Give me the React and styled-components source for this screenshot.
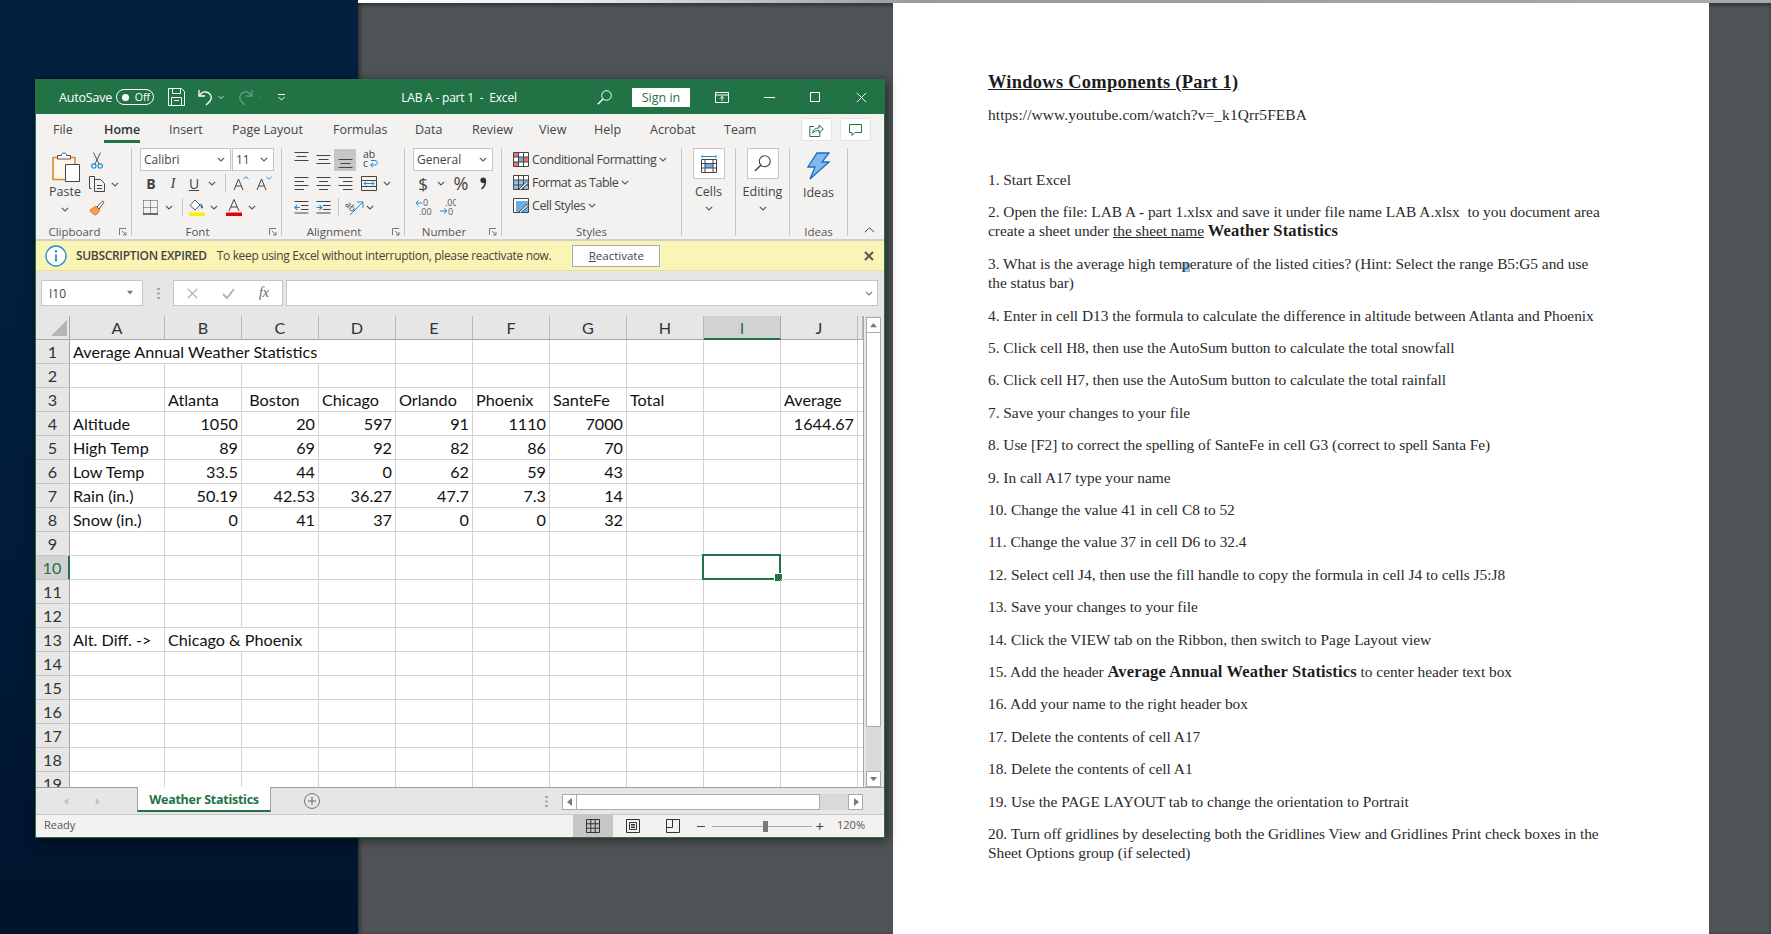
import React from "react";
import styled, { createGlobalStyle } from "styled-components";

const UI_FONT = `"Open Sans", "Noto Sans", sans-serif`;
const CELL_FONT = `Lato, "Open Sans", sans-serif`;
const GREEN = "#217346";

const GlobalStyle = createGlobalStyle`
  html, body { margin: 0; padding: 0; height: 100%; overflow: hidden; }
  #root { height: 100%; }
  * { box-sizing: border-box; }
`;

// page background: desktop on the left, pdf viewer on the right
const Screen = styled.div`
  position: relative;
  display: grid;
  grid-template-columns: 358px 1fr;
  height: 934px;
  width: 1771px;
  overflow: hidden;
`;

const Desktop = styled.div`
  background: linear-gradient(180deg, #03213f 0%, #011d3e 45%, #00142c 100%);
`;

const Viewer = styled.div`
  display: flex;
  flex-direction: column;
  background: #4f5356;
  box-shadow: inset 3px 0 3px rgba(0, 0, 0, 0.25);
`;

const ViewerEdge = styled.div`
  height: 3px;
  flex: none;
  background: linear-gradient(90deg, #fff 0%, #eee 15%, #999 40%, #aaa 100%);
`;

const ViewerBody = styled.div`
  flex: 1;
  padding-left: 535px;
  box-shadow: inset 0 3px 3px rgba(0, 0, 0, 0.3);
`;

const Page = styled.div`
  width: 816px;
  height: 100%;
  background: #fff;
  padding: 68px 0 0 95px;
  font-family: "Liberation Serif", serif;
  font-size: 15.4px;
  line-height: 19.5px;
  letter-spacing: -0.03px;
  color: #2a2a2a;
`;

const DocTitle = styled.div`
  font-size: 18.4px;
  font-weight: bold;
  text-decoration: underline;
  color: #1c1c1c;
  letter-spacing: 0.3px;
  line-height: 22px;
  margin-bottom: 12px;
`;

const DocLink = styled.div`
  letter-spacing: 0.1px;
  margin-bottom: 45px;
`;

const Step = styled.p`
  margin: 0 0 12.9px;
  width: 618px;
  strong {
    font-size: 16.5px;
    letter-spacing: 0.15px;
    color: #1c1c1c;
  }
`;

const Caret = styled.span`
  background: linear-gradient(180deg, transparent 48%, #9cc3e0 48%);
`;

// Excel window
const ExcelWindow = styled.div`
  position: absolute;
  left: 35px;
  top: 79px;
  width: 850px;
  height: 759px;
  display: flex;
  flex-direction: column;
  border: 1px solid ${GREEN};
  background: #e6e6e6;
  box-shadow: 2px 2px 10px rgba(0, 0, 0, 0.55);
  font-family: ${UI_FONT};
  color: #444;
`;

const TitleBar = styled.div`
  height: 34px;
  flex: none;
  display: flex;
  align-items: center;
  background: ${GREEN};
  color: #fff;
  font-size: 12.5px;
  padding-left: 23px;
`;

const TitleSlot = styled.div`
  flex: none;
  width: ${(p) => p.$w}px;
  margin-left: ${(p) => p.$ml || 0}px;
  display: flex;
  align-items: center;
  justify-content: center;
`;

const AutoSaveLabel = styled.span`
  width: 57px;
  letter-spacing: -0.2px;
`;

const Toggle = styled.div`
  width: 38px;
  height: 16px;
  border: 1px solid #fff;
  border-radius: 8px;
  display: flex;
  align-items: center;
  padding: 0 3px 0 5px;
  justify-content: space-between;
  font-size: 10.5px;
  margin-right: 12px;
  &::before {
    content: "";
    width: 7px;
    height: 7px;
    border-radius: 50%;
    background: #fff;
  }
`;

const WindowName = styled.div`
  width: 120px;
  margin-left: 98px;
  margin-right: 77px;
  text-align: center;
  white-space: pre;
  font-size: 12px;
  letter-spacing: -0.2px;
`;

const SignIn = styled.div`
  width: 58px;
  height: 19px;
  background: #fff;
  color: ${GREEN};
  font-size: 12.5px;
  line-height: 19px;
  text-align: center;
  margin: 0 12px 0 20px;
`;

const TabRow = styled.div`
  height: 29px;
  flex: none;
  display: flex;
  align-items: flex-start;
  padding: 6px 13px 0 17px;
  background: #f3f2f1;
`;

const Tab = styled.div`
  width: ${(p) => p.$w}px;
  flex: none;
  display: flex;
`;

const TabLabel = styled.div`
  height: 23px;
  font-size: 12.5px;
  line-height: 20px;
  color: ${(p) => (p.$on ? "#333" : "#444")};
  font-weight: ${(p) => (p.$on ? 600 : 400)};
  border-bottom: ${(p) => (p.$on ? `3px solid ${GREEN}` : "3px solid transparent")};
`;

const TabActions = styled.div`
  margin-left: auto;
  display: flex;
  gap: 8px;
  margin-top: -2px;
`;

const TabAction = styled.div`
  width: 31px;
  height: 23px;
  background: #fff;
  border: 1px solid #e4e3e2;
  border-radius: 2px;
  display: flex;
  align-items: center;
  justify-content: center;
`;

const Ribbon = styled.div`
  height: 98px;
  flex: none;
  display: flex;
  padding-top: 5px;
  background: #f3f2f1;
  border-bottom: 2px solid #d2d0ce;
  position: relative;
`;

const Group = styled.div`
  width: ${(p) => p.$w}px;
  height: 88px;
  flex: none;
  display: flex;
  flex-direction: column;
  border-right: 1px solid #c6c5c4;
  position: relative;
`;

const GroupBody = styled.div`
  flex: 1;
  display: flex;
  padding-left: ${(p) => p.$pad || 0}px;
`;

const GroupStack = styled(GroupBody)`
  flex-direction: column;
`;

const GroupLabel = styled.div`
  height: 16px;
  flex: none;
  font-size: 11.5px;
  line-height: 24px;
  text-align: center;
  padding-right: ${(p) => (p.$launcher ? 18 : 0)}px;
  color: #555;
`;

const Launcher = styled.svg`
  position: absolute;
  right: 4px;
  bottom: 0;
`;

const PasteColumn = styled.div`
  width: 52px;
  display: flex;
  flex-direction: column;
  align-items: center;
  font-size: 12.5px;
  padding-top: 3px;
  margin-left: 3px;
  svg:first-child {
    margin-left: 2px;
  }
`;

const PasteText = styled.div`
  line-height: 16px;
  margin: 2px 0 7px;
`;

const ToolColumn = styled.div`
  display: flex;
  flex-direction: column;
  margin-left: -3px;
`;

const ToolRow = styled.div`
  height: ${(p) => p.$h || 24}px;
  display: flex;
  align-items: center;
`;

const Slot = styled.div`
  width: ${(p) => p.$w}px;
  height: 22px;
  flex: none;
  display: flex;
  align-items: center;
  justify-content: center;
  font-family: ${(p) => (p.$serif ? `"Liberation Serif", serif` : "inherit")};
  font-size: ${(p) => p.$size || 14}px;
  font-weight: ${(p) => (p.$bold ? 700 : 400)};
  font-style: ${(p) => (p.$italic ? "italic" : "normal")};
  text-decoration: ${(p) => (p.$under ? "underline" : "none")};
  background: ${(p) => (p.$on ? "#c6c6c6" : "transparent")};
  color: #444;
`;

const RowRule = styled.div`
  width: ${(p) => p.$w}px;
  flex: none;
  height: 18px;
  display: flex;
  justify-content: center;
  &::before {
    content: "";
    width: 1px;
    background: #c6c5c4;
  }
`;

const Combo = styled.div`
  width: ${(p) => p.$w}px;
  height: 23px;
  background: #fff;
  border: 1px solid #c6c6c6;
  display: flex;
  align-items: center;
  justify-content: space-between;
  padding: 0 5px 0 3px;
  font-size: 12px;
  margin-right: ${(p) => p.$mr || 0}px;
  color: #444;
`;

const StyleRow = styled.div`
  height: 23px;
  display: flex;
  align-items: center;
  gap: 3px;
  font-size: 12.5px;
  letter-spacing: -0.45px;
  color: #444;
`;

const BigColumn = styled.div`
  flex: 1;
  display: flex;
  flex-direction: column;
  align-items: center;
  font-size: 12.5px;
`;

const BigButton = styled.div`
  width: 32px;
  height: 31px;
  background: #fff;
  border: 1px solid #c6c6c6;
  display: flex;
  align-items: center;
  justify-content: center;
`;

const BigText = styled.div`
  line-height: 16px;
  margin: 5px 0 6px;
`;

const IdeasText = styled.div`
  line-height: 16px;
  margin-top: 5px;
`;

const IdeaMark = styled.div`
  display: flex;
  margin-top: 4px;
`;

const Collapse = styled.svg`
  position: absolute;
  right: 9px;
  bottom: 6px;
`;

// subscription notice
const Notice = styled.div`
  height: 30px;
  flex: none;
  display: flex;
  align-items: center;
  background: #fbf5b5;
  border-bottom: 1px solid #e6e29f;
  padding: 0 10px 0 9px;
  font-size: 12px;
  color: #444;
`;

const NoticeHead = styled.span`
  margin: 0 10px 0 9px;
  font-weight: 600;
  letter-spacing: -0.32px;
`;

const NoticeText = styled.span`
  letter-spacing: -0.34px;
`;

const NoticeButton = styled.div`
  width: 88px;
  height: 22px;
  margin-left: 21px;
  background: #fff;
  border: 1px solid #a8a8a8;
  text-align: center;
  line-height: 19px;
  font-size: 11.5px;
  u {
    text-decoration: underline;
  }
`;

const NoticeClose = styled.svg`
  margin-left: auto;
`;

// formula bar
const FormulaBar = styled.div`
  height: 45px;
  flex: none;
  display: flex;
  align-items: flex-start;
  padding: 9px 6px 0 5px;
  background: #e6e6e6;
`;

const NameBox = styled.div`
  width: 102px;
  height: 26px;
  background: #fff;
  border: 1px solid #c6c6c6;
  display: flex;
  align-items: center;
  justify-content: space-between;
  padding: 0 9px 0 7px;
  font-size: 12px;
`;

const Grip = styled.div`
  width: 30px;
  height: 26px;
  display: flex;
  align-items: center;
  justify-content: center;
`;

const FxBox = styled.div`
  width: 110px;
  height: 26px;
  background: #fff;
  border: 1px solid #c6c6c6;
  display: grid;
  grid-template-columns: repeat(3, 36px);
  align-items: center;
  justify-items: center;
  margin-right: 3px;
`;

const FxMark = styled.span`
  font-family: "Liberation Serif", serif;
  font-style: italic;
  font-size: 14px;
  color: #666;
`;

const FormulaInput = styled.div`
  flex: 1;
  height: 26px;
  background: #fff;
  border: 1px solid #c6c6c6;
  display: flex;
  align-items: center;
  justify-content: flex-end;
  padding-right: 4px;
`;

// worksheet
const SheetArea = styled.div`
  height: 471px;
  flex: none;
  display: flex;
  align-items: stretch;
`;

const GridClip = styled.div`
  width: 828px;
  flex: none;
  overflow: hidden;
  border-right: 1px solid #a8a8a8;
  margin-right: 2px;
  background: #fff;
`;

const SheetGrid = styled.div`
  display: grid;
  grid-template-columns: 34px 95px repeat(9, 77px) 5px;
  grid-auto-rows: 24px;
  font-family: ${CELL_FONT};
  font-size: 16.2px;
  color: #111;
`;

const Corner = styled.div`
  background: #e6e6e6;
  border-right: 1px solid #a8a8a8;
  border-bottom: 1px solid #a8a8a8;
  &::after {
    content: "";
    display: block;
    width: 16px;
    height: 16px;
    margin: 4px 0 0 15px;
    background: #b5b5b5;
    clip-path: polygon(100% 0, 100% 100%, 0 100%);
  }
`;

const ColHead = styled.div`
  background: ${(p) => (p.$on ? "#d2d2d2" : "#e6e6e6")};
  border-right: 1px solid ${(p) => (p.$on ? "#a8a8a8" : "#b8b8b8")};
  border-bottom: ${(p) => (p.$on ? `2px solid ${GREEN}` : "1px solid #a8a8a8")};
  color: ${(p) => (p.$on ? GREEN : "#333")};
  text-align: center;
  line-height: 23px;
`;

const RowHead = styled.div`
  background: ${(p) => (p.$on ? "#d2d2d2" : "#e6e6e6")};
  border-right: ${(p) => (p.$on ? `2px solid ${GREEN}` : "1px solid #a8a8a8")};
  border-bottom: 1px solid #c4c4c4;
  color: ${(p) => (p.$on ? GREEN : "#333")};
  text-align: center;
  line-height: 23px;
`;

const Cell = styled.div`
  position: relative;
  border-bottom: 1px solid #d4d4d4;
  border-right: ${(p) => (p.$spill ? "none" : "1px solid #d4d4d4")};
  padding: 0 3px;
  line-height: 24px;
  white-space: nowrap;
  text-align: ${(p) => (p.$num ? "right" : "left")};
`;

const Selection = styled.div`
  position: absolute;
  top: -2px;
  left: -2px;
  right: -1px;
  bottom: -1px;
  border: 2px solid ${GREEN};
  &::after {
    content: "";
    position: absolute;
    right: -4px;
    bottom: -4px;
    width: 7px;
    height: 7px;
    background: ${GREEN};
    border: 1px solid #fff;
  }
`;

const VScroll = styled.div`
  width: 15px;
  flex: none;
  display: flex;
  flex-direction: column;
  padding-top: 1px;
  background: #d9d9d9;
`;

const ScrollButton = styled.div`
  width: 15px;
  height: 16px;
  flex: none;
  background: #fff;
  border: 1px solid #ababab;
  display: flex;
  align-items: center;
  justify-content: center;
`;

const VThumb = styled.div`
  height: 394px;
  flex: none;
  background: #fff;
  border: 1px solid #ababab;
  border-top: 0;
  margin-bottom: auto;
`;

// tabs + status bar
const SheetBar = styled.div`
  height: 28px;
  flex: none;
  display: flex;
  align-items: flex-start;
  background: #e6e6e6;
  border-top: 1px solid #a0a0a0;
  border-bottom: 1px solid #c8c8c8;
`;

const SheetArrows = styled.div`
  width: 101px;
  height: 26px;
  flex: none;
  display: flex;
  gap: 24px;
  align-items: center;
  padding-left: 27px;
`;

const SheetTab = styled.div`
  width: 134px;
  height: 25px;
  margin-top: -1px;
  flex: none;
  background: #fff;
  border-left: 1px solid #a0a0a0;
  border-right: 1px solid #a0a0a0;
  border-bottom: 2px solid ${GREEN};
  color: ${GREEN};
  font-weight: 700;
  font-size: 12.5px;
  letter-spacing: -0.25px;
  text-align: center;
  line-height: 26px;
`;

const AddSheet = styled.div`
  width: 16px;
  height: 16px;
  margin: 5px 0 0 33px;
  flex: none;
  border: 1px solid #777;
  border-radius: 50%;
  display: flex;
  align-items: center;
  justify-content: center;
`;

const BarGrip = styled.div`
  width: 12px;
  margin-left: 220px;
  height: 26px;
  flex: none;
  display: flex;
  align-items: center;
  justify-content: center;
`;

const HScroll = styled.div`
  width: 301px;
  height: 16px;
  margin: 6px 0 0 10px;
  flex: none;
  display: flex;
  background: #d9d9d9;
`;

const HThumb = styled.div`
  width: 243px;
  flex: none;
  background: #fff;
  border: 1px solid #ababab;
  border-left: 0;
  margin-right: auto;
`;

const StatusBar = styled.div`
  height: 22px;
  flex: none;
  display: flex;
  align-items: center;
  padding: 0 19px 0 8px;
  background: #f3f2f1;
  font-size: 11px;
  color: #555;
`;

const StatusText = styled.span`
  margin-bottom: 3px;
`;

const ViewButton = styled.div`
  width: 40px;
  height: 22px;
  flex: none;
  display: flex;
  align-items: center;
  justify-content: center;
  background: ${(p) => (p.$on ? "#c6c6c6" : "transparent")};
  margin-left: ${(p) => (p.$on ? "auto" : "0")};
`;

const ZoomMinus = styled.span`
  width: 8px;
  height: 1px;
  margin: 0 7px 0 4px;
  background: #444;
`;

const ZoomTrack = styled.div`
  width: 100px;
  height: 1px;
  background: #a8a8a8;
  position: relative;
  &::after {
    content: "";
    position: absolute;
    left: 51px;
    top: -5px;
    width: 5px;
    height: 11px;
    background: #777;
  }
`;

const ZoomPlus = styled.span`
  margin: 0 13px 0 3px;
  font-size: 15px;
  line-height: 1;
  color: #444;
`;

// ---- icons ----
const Chevron = ({ color = "#555" }) => (
  <svg width="8" height="5" viewBox="0 0 8 5">
    <path d="M.8.8 4 4 7.2.8" fill="none" stroke={color} strokeWidth="1.1" />
  </svg>
);

const Tri = ({ dir = "down", color = "#777", size = 6 }) => {
  const shapes = { down: "0,1 8,1 4,6", up: "0,6 8,6 4,1", left: "6,0 6,8 1,4", right: "2,0 2,8 7,4" };
  return (
    <svg width={size} height={size} viewBox="0 0 8 8">
      <polygon points={shapes[dir]} fill={color} />
    </svg>
  );
};

const Bars = ({ rows, h = 18, color = "#444" }) => (
  <svg width="15" height={h} viewBox={`0 0 15 ${h}`}>
    {rows.map(([a, b, y], i) => (
      <path key={i} d={`M${a} ${y}H${b}`} stroke={color} />
    ))}
  </svg>
);

const VALIGN_TOP = [[.5, 14.5, 1.5], [2.5, 12.5, 5.5], [.5, 14.5, 9.5]];
const VALIGN_MID = [[.5, 14.5, 4.5], [2.5, 12.5, 8.5], [.5, 14.5, 12.5]];
const VALIGN_BOT = [[.5, 14.5, 8.5], [2.5, 12.5, 12.5], [.5, 14.5, 16.5]];
const ALIGN_LEFT = [[.5, 14.5, 3.5], [.5, 10, 7.5], [.5, 14.5, 11.5], [.5, 10, 15.5]];
const ALIGN_MID = [[.5, 14.5, 3.5], [3, 12, 7.5], [.5, 14.5, 11.5], [3, 12, 15.5]];
const ALIGN_RIGHT = [[.5, 14.5, 3.5], [5, 14.5, 7.5], [.5, 14.5, 11.5], [5, 14.5, 15.5]];

const Indent = ({ flip }) => (
  <svg width="15" height="14" viewBox="0 0 15 14">
    <path d="M.5 1.5h14M7 5.5h7.5M7 9.5h7.5M.5 13h14" stroke="#444" />
    <path d={flip ? "M.5 7.5h5M3.5 5.2l2.3 2.3-2.3 2.3" : "M6 7.5H1M3.2 5.2.9 7.5l2.3 2.3"} fill="none" stroke="#1f8dd6" strokeWidth="1.2" />
  </svg>
);

const SaveIcon = () => (
  <svg width="17" height="18" viewBox="0 0 17 18" fill="none" stroke="#fff">
    <path d="M.5.5h13l3 3v14H.5z" />
    <path d="M4.5.5v5h8v-5M3.5 17.5v-8h10v8M6 12.5h5" />
  </svg>
);

const UndoIcon = ({ color = "#fff", flip }) => (
  <svg width="16" height="17" viewBox="0 0 16 17" fill="none" stroke={color} strokeWidth="1.3" style={flip ? { transform: "scaleX(-1)" } : undefined}>
    <path d="M1 1v6h6" />
    <path d="M1 7c2-3 4-4.500 7-4 4 .6 6 4 5 7-.5 1.800-2.500 4-5 6" />
  </svg>
);

const CustomizeIcon = () => (
  <svg width="9" height="7" viewBox="0 0 9 7">
    <path d="M1 .5h7M1.500 3 4.500 6l3-3" fill="none" stroke="#fff" />
  </svg>
);

const SearchIcon = ({ color = "#fff", size = 15 }) => (
  <svg width={size} height={size} viewBox="0 0 15 15" fill="none" stroke={color}>
    <circle cx="9.5" cy="5.5" r="4.8" />
    <path d="M6 9 .8 14.200" strokeWidth="1.3" />
  </svg>
);

const DisplayIcon = () => (
  <svg width="14" height="11" viewBox="0 0 14 11" fill="none" stroke="#fff">
    <path d="M.5.5h13v10H.5zM.5 3h13" />
    <path d="M7 9V4.500M5 6.500l2-2 2 2" />
  </svg>
);

const ShareIcon = () => (
  <svg width="15" height="14" viewBox="0 0 15 14" fill="none" stroke={GREEN}>
    <path d="M5 3.500H.8v10h10V9" />
    <path d="M3.500 10c.5-3.500 3-5 6.500-5V2l4.300 4-4.300 4V7.500c-2.500 0-4.500.5-6.500 2.500z" />
  </svg>
);

const CommentIcon = () => (
  <svg width="13" height="12" viewBox="0 0 13 12" fill="none" stroke={GREEN}>
    <path d="M.5.5h12v8H6l-3 3v-3H.5z" />
  </svg>
);

const PasteIcon = () => (
  <svg width="30" height="31" viewBox="0 0 30 31">
    <path d="M2 6.5h22v22H2z" fill="#fff8ef" stroke="#e5852b" strokeWidth="1.6" />
    <path d="M6.500 8V4.500h4c0-3.500 5-3.500 5 0h4V8z" fill="#fff" stroke="#555" />
    <path d="M14.500 13.500h14v17h-14z" fill="#fff" stroke="#444" />
  </svg>
);

const CutIcon = () => (
  <svg width="12" height="17" viewBox="0 0 12 17" fill="none">
    <path d="M2.500 .5 8 12M9.500.5 4 12" stroke="#555" />
    <circle cx="2.8" cy="14" r="2.2" stroke="#1f8dd6" strokeWidth="1.2" />
    <circle cx="9.2" cy="14" r="2.2" stroke="#1f8dd6" strokeWidth="1.2" />
  </svg>
);

const CopyIcon = () => (
  <svg width="17" height="16" viewBox="0 0 17 16" fill="none" stroke="#444">
    <path d="M5.500 3.500V.5H.5v12h2" />
    <path d="M5.500 3.500h6l4 4v8h-10z" />
    <path d="M8 9.500h5M8 12.500h5" />
  </svg>
);

const PainterIcon = () => (
  <svg width="16" height="16" viewBox="0 0 16 16">
    <path d="M1 10 7 6l4 4-4 5C5 15 2 13 1 10z" fill="#f3a14b" stroke="#e0752a" />
    <path d="M8 7l5-5.500c1-1 2.500.5 1.500 1.500L10 9z" fill="#fff" stroke="#555" />
  </svg>
);

const BorderIcon = () => (
  <svg width="15" height="15" viewBox="0 0 15 15" fill="none" stroke="#444">
    <path d="M.5.5h14M.5 7.500h14M7.500.5v13M.5.5v13M14.500.5v13" strokeDasharray="1 1" />
    <path d="M0 14h15" strokeWidth="1.3" stroke="#222" />
  </svg>
);

const FillIcon = () => (
  <svg width="16" height="17" viewBox="0 0 16 17">
    <path d="M6 1 1 6.500 6 11l5-5z" fill="#fff" stroke="#555" />
    <path d="M11 4.500c2 1 3 2.500 3 4a1 1 0 0 1-2 0z" fill="#1b6ec2" />
    <path d="M0 13.500h16V17H0z" fill="#ffee00" />
  </svg>
);

const FontColorIcon = () => (
  <svg width="16" height="17" viewBox="0 0 16 17">
    <path d="M3 12 8 .5 13 12M5 8h6" fill="none" stroke="#444" />
    <path d="M0 13.500h16V17H0z" fill="#e60000" />
  </svg>
);

const Caretted = ({ up }) => (
  <svg width="16" height="15" viewBox="0 0 16 15" fill="none">
    <path d="M1 14 5.500 3 10 14M2.800 10h5.500" stroke="#444" />
    <path d={up ? "M10.500 3 13 .8 15.500 3" : "M10.500 1 13 3.200 15.500 1"} stroke="#1f8dd6" />
  </svg>
);

const WrapIcon = () => (
  <svg width="17" height="19" viewBox="0 0 17 19" fill="none">
    <text x="1" y="8" fontSize="10.5" fontFamily="Open Sans" fill="#444">ab</text>
    <text x="1" y="17" fontSize="10.5" fontFamily="Open Sans" fill="#444">c</text>
    <path d="M9 15h4c3 0 3-4.500 0-4.500H9M11 13 8.500 15l2.500 2.200" stroke="#1f8dd6" />
  </svg>
);

const MergeIcon = () => (
  <svg width="16" height="15" viewBox="0 0 16 15" fill="none">
    <path d="M.5.5h15v14H.5z" stroke="#444" />
    <path d="M.5 4.500h15M.5 10.500h15" stroke="#444" />
    <path d="M3 7.500h10M5 5.500l-2 2 2 2M11 5.500l2 2-2 2" stroke="#1f8dd6" />
  </svg>
);

const OrientIcon = () => (
  <svg width="20" height="17" viewBox="0 0 20 17" fill="none">
    <text x="2" y="9" fontSize="9" fontFamily="Open Sans" fill="#444" transform="rotate(45 5 6)">ab</text>
    <path d="M6 16 18.500 3.500M13 3h6v6" stroke="#1f8dd6" />
  </svg>
);

const DecimalIcon = ({ more }) => (
  <svg width="17" height="19" viewBox="0 0 17 19">
    <text x={more ? 6 : 8} y="8" fontSize="9" fontFamily="Open Sans" fill="#555">{more ? ".00" : "0"}</text>
    <text x={more ? 9 : 4} y="17" fontSize="9" fontFamily="Open Sans" fill="#555">{more ? "0" : ".00"}</text>
    <path d={more ? "M1 13h7M5 10.500 8 13l-3 2.500" : "M7 5H1M3.500 2.500 1 5l2.500 2.500"} fill="none" stroke="#1f8dd6" />
  </svg>
);

const CommaIcon = () => (
  <svg width="7" height="13" viewBox="0 0 7 13">
    <circle cx="3.2" cy="3.2" r="2.8" fill="#333" />
    <path d="M5.500 3.500c0 3.500-1.500 6.500-4 8.500" fill="none" stroke="#333" strokeWidth="1.6" />
  </svg>
);

const CondIcon = () => (
  <svg width="16" height="15" viewBox="0 0 16 15">
    <path d="M.5.5h15v14H.5z" fill="#fff" stroke="#444" />
    <path d="M1 1h5v4H1zM1 10h5v4H1zM10.500 5H15v5h-4.500z" fill="#f07070" />
    <path d="M6 5h4.500v5H6z" fill="#6aaee8" />
    <path d="M5.500.5v14M10.500.5v14M.5 5h15M.5 10h15" stroke="#444" fill="none" />
  </svg>
);

const TableIcon = () => (
  <svg width="16" height="15" viewBox="0 0 16 15">
    <path d="M.5.5h15v14H.5z" fill="#fff" stroke="#444" />
    <path d="M1 5h14v9H1z" fill="#8cc0ee" />
    <path d="M5.500.5v14M10.500.5v14M.5 5h15M.5 10h15" stroke="#444" fill="none" />
    <path d="M6 14 14 6.500l1.500 1.500L7.500 15z" fill="#fff" stroke="#444" />
  </svg>
);

const CellStyleIcon = () => (
  <svg width="16" height="15" viewBox="0 0 16 15">
    <path d="M.5.5h15v14H.5z" fill="#fff" stroke="#444" />
    <path d="M3 3h12v11H3z" fill="#6aaee8" />
    <path d="M6 14 14 6.500l1.500 1.500L7.500 15z" fill="#fff" stroke="#444" />
  </svg>
);

const CellsIcon = () => (
  <svg width="16" height="18" viewBox="0 0 16 18">
    <path d="M1 1.500h14M1 0v3M15 0v3" stroke="#1f8dd6" fill="none" />
    <path d="M.5 4.500h15v13H.5z" fill="#fff" stroke="#444" />
    <path d="M4 8h8v5H4z" fill="#6aaee8" />
    <path d="M4 4.500v13M12 4.500v13M.5 8.500h15M.5 13h15" stroke="#444" fill="none" />
  </svg>
);

const BoltIcon = () => (
  <svg width="23" height="28" viewBox="0 0 23 28">
    <path d="M10 1h12l-7 9h7L3 27l5-12H1z" fill="#83b9ec" stroke="#1a6fc0" strokeWidth="1.3" />
  </svg>
);

const InfoIcon = () => (
  <svg width="22" height="22" viewBox="0 0 22 22">
    <circle cx="11" cy="11" r="10" fill="#fff" stroke="#1f8dd6" strokeWidth="1.3" />
    <path d="M11 9.500v7" stroke="#1f8dd6" strokeWidth="1.8" />
    <circle cx="11" cy="6.3" r="1.2" fill="#1f8dd6" />
  </svg>
);

const CrossIcon = ({ color = "#fff", size = 12, width = 1 }) => (
  <svg width={size} height={size} viewBox="0 0 12 12">
    <path d="M.8.8l10.400 10.400M11.200.8.8 11.200" stroke={color} strokeWidth={width} />
  </svg>
);

const CheckIcon = () => (
  <svg width="13" height="11" viewBox="0 0 13 11">
    <path d="M1 6l4 4 7-9" fill="none" stroke="#b4b4b4" strokeWidth="2" />
  </svg>
);

const GripDots = () => (
  <svg width="3" height="11" viewBox="0 0 3 11" fill="#aaa">
    <path d="M0 0h3v2H0zM0 4.500h3v2H0zM0 9h3v2H0z" />
  </svg>
);

const LauncherIcon = () => (
  <Launcher width="8" height="8" viewBox="0 0 8 8" fill="none" stroke="#777">
    <path d="M.5 7V.5H7M3 3l4 4M7 4v3H4" />
  </Launcher>
);

const GridView = () => (
  <svg width="14" height="14" viewBox="0 0 14 14" fill="none" stroke="#333">
    <path d="M.5.5h13v13H.5zM4.800.5v13M9.200.5v13M.5 4.800h13M.5 9.200h13" />
  </svg>
);

const PageView = () => (
  <svg width="14" height="14" viewBox="0 0 14 14" fill="none" stroke="#333">
    <path d="M.5.5h13v13H.5zM3.500 3.500h7v7h-7zM5 5.500h4M5 7h4M5 8.500h4" />
  </svg>
);

const BreakView = () => (
  <svg width="14" height="14" viewBox="0 0 14 14" fill="none" stroke="#333">
    <path d="M.5.5h13v13H.5zM.5 8.500h6v-8" />
  </svg>
);

// ---- data ----
const COLS = ["A", "B", "C", "D", "E", "F", "G", "H", "I", "J"];

const DATA = {
  1: ["Average Annual Weather Statistics"],
  3: ["", "Atlanta", "\u00a0Boston", "Chicago", "Orlando", "Phoenix", "SanteFe", "Total", "", "Average"],
  4: ["Altitude", 1050, 20, 597, 91, 1110, 7000, "", "", 1644.67],
  5: ["High Temp", 89, 69, 92, 82, 86, 70],
  6: ["Low Temp", 33.5, 44, 0, 62, 59, 43],
  7: ["Rain (in.)", 50.19, 42.53, 36.27, 47.7, 7.3, 14],
  8: ["Snow (in.)", 0, 41, 37, 0, 0, 32],
  13: ["Alt. Diff. ->", "Chicago & Phoenix"],
};

// cells whose text runs over into the next one
const SPILL = ["1-0", "1-1", "1-2", "13-1"];

const ROW_NUMBERS = Array.from({ length: 19 }, (_, i) => i + 1);

// ribbon tab name, and the room it takes up to the next tab
const TABS = [
  ["File", 51],
  ["Home", 65],
  ["Insert", 63],
  ["Page Layout", 101],
  ["Formulas", 82],
  ["Data", 57],
  ["Review", 67],
  ["View", 55],
  ["Help", 56],
  ["Acrobat", 74],
  ["Team", 40],
];

const Worksheet = () => (
  <SheetGrid>
    <Corner />
    {COLS.map((c) => (
      <ColHead key={c} $on={c === "I"}>{c}</ColHead>
    ))}
    <ColHead />
    {ROW_NUMBERS.map((r) => (
      <React.Fragment key={r}>
        <RowHead $on={r === 10}>{r}</RowHead>
        {COLS.map((c, i) => {
          const value = DATA[r]?.[i] ?? "";
          return (
            <Cell key={c} $num={typeof value === "number"} $spill={SPILL.includes(`${r}-${i}`)}>
              {value}
              {r === 10 && c === "I" && <Selection />}
            </Cell>
          );
        })}
        <Cell />
      </React.Fragment>
    ))}
  </SheetGrid>
);

const App = () => (
  <Screen>
    <GlobalStyle />
    <Desktop />
    <Viewer>
      <ViewerEdge />
      <ViewerBody>
        <Page>
          <DocTitle>Windows Components (Part 1)</DocTitle>
          <DocLink>https://www.youtube.com/watch?v=_k1Qrr5FEBA</DocLink>
          <Step>1. Start Excel</Step>
          <Step>
            2. Open the file: LAB A - part 1.xlsx and save it under file name LAB A.xlsx&nbsp; to you document area create a sheet under <u>the sheet name</u> <strong>Weather Statistics</strong>
          </Step>
          <Step>
            3. What is the average high tem<Caret>p</Caret>erature of the listed cities? (Hint: Select the range B5:G5 and use the status bar)
          </Step>
          <Step>4. Enter in cell D13 the formula to calculate the difference in altitude between Atlanta and Phoenix</Step>
          <Step>5. Click cell H8, then use the AutoSum button to calculate the total snowfall</Step>
          <Step>6. Click cell H7, then use the AutoSum button to calculate the total rainfall</Step>
          <Step>7. Save your changes to your file</Step>
          <Step>8. Use [F2] to correct the spelling of SanteFe in cell G3 (correct to spell Santa Fe)</Step>
          <Step>9. In call A17 type your name</Step>
          <Step>10. Change the value 41 in cell C8 to 52</Step>
          <Step>11. Change the value 37 in cell D6 to 32.4</Step>
          <Step>12. Select cell J4, then use the fill handle to copy the formula in cell J4 to cells J5:J8</Step>
          <Step>13. Save your changes to your file</Step>
          <Step>14. Click the VIEW tab on the Ribbon, then switch to Page Layout view</Step>
          <Step>
            15. Add the header <strong>Average Annual Weather Statistics</strong> to center header text box
          </Step>
          <Step>16. Add your name to the right header box</Step>
          <Step>17. Delete the contents of cell A17</Step>
          <Step>18. Delete the contents of cell A1</Step>
          <Step>19. Use the PAGE LAYOUT tab to change the orientation to Portrait</Step>
          <Step>20. Turn off gridlines by deselecting both the Gridlines View and Gridlines Print check boxes in the Sheet Options group (if selected)</Step>
        </Page>
      </ViewerBody>
    </Viewer>

    <ExcelWindow>
      <TitleBar>
        <AutoSaveLabel>AutoSave</AutoSaveLabel>
        <Toggle>Off</Toggle>
        <TitleSlot $w={21}><SaveIcon /></TitleSlot>
        <TitleSlot $w={24} $ml={7}><UndoIcon /></TitleSlot>
        <TitleSlot $w={6}><Chevron color="#fff" /></TitleSlot>
        <TitleSlot $w={24} $ml={9}><UndoIcon color="#5f9f7d" flip /></TitleSlot>
        <TitleSlot $w={4}><Chevron color="#5f9f7d" /></TitleSlot>
        <TitleSlot $w={40}><CustomizeIcon /></TitleSlot>
        <WindowName>{"LAB A - part 1  -  Excel"}</WindowName>
        <TitleSlot $w={16}><SearchIcon /></TitleSlot>
        <SignIn>Sign in</SignIn>
        <TitleSlot $w={40}><DisplayIcon /></TitleSlot>
        <TitleSlot $w={46} $ml={4}><Bars rows={[[2, 13, 5.5]]} h={11} color="#fff" /></TitleSlot>
        <TitleSlot $w={46}>
          <svg width="10" height="10" viewBox="0 0 10 10"><path d="M.5.5h9v9h-9z" fill="none" stroke="#fff" /></svg>
        </TitleSlot>
        <TitleSlot $w={46}><CrossIcon size={11} /></TitleSlot>
      </TitleBar>

      <TabRow>
        {TABS.map(([name, room]) => (
          <Tab key={name} $w={room}>
            <TabLabel $on={name === "Home"}>{name}</TabLabel>
          </Tab>
        ))}
        <TabActions>
          <TabAction><ShareIcon /></TabAction>
          <TabAction><CommentIcon /></TabAction>
        </TabActions>
      </TabRow>

      <Ribbon>
        <Group $w={96}>
          <GroupBody>
            <PasteColumn>
              <PasteIcon />
              <PasteText>Paste</PasteText>
              <Chevron />
            </PasteColumn>
            <ToolColumn>
              <ToolRow><Slot $w={18}><CutIcon /></Slot></ToolRow>
              <ToolRow><Slot $w={18}><CopyIcon /></Slot><Slot $w={18}><Chevron /></Slot></ToolRow>
              <ToolRow><Slot $w={18}><PainterIcon /></Slot></ToolRow>
            </ToolColumn>
          </GroupBody>
          <GroupLabel $launcher>Clipboard</GroupLabel>
          <LauncherIcon />
        </Group>

        <Group $w={150}>
          <GroupStack $pad={8}>
            <ToolRow $h={23}>
              <Combo $w={91} $mr={1}>Calibri<Chevron /></Combo>
              <Combo $w={42}>11<Chevron /></Combo>
            </ToolRow>
            <ToolRow>
              <Slot $w={22} $bold>B</Slot>
              <Slot $w={22} $italic $serif $size={15}>I</Slot>
              <Slot $w={20} $under>U</Slot>
              <Slot $w={16}><Chevron /></Slot>
              <RowRule $w={10} />
              <Slot $w={22}><Caretted up /></Slot>
              <Slot $w={24}><Caretted /></Slot>
            </ToolRow>
            <ToolRow>
              <Slot $w={20}><BorderIcon /></Slot>
              <Slot $w={18}><Chevron /></Slot>
              <RowRule $w={8} />
              <Slot $w={22}><FillIcon /></Slot>
              <Slot $w={12}><Chevron /></Slot>
              <Slot $w={28}><FontColorIcon /></Slot>
              <Slot $w={8}><Chevron /></Slot>
            </ToolRow>
          </GroupStack>
          <GroupLabel $launcher>Font</GroupLabel>
          <LauncherIcon />
        </Group>

        <Group $w={123}>
          <GroupStack $pad={8}>
            <ToolRow $h={23}>
              <Slot $w={22}><Bars rows={VALIGN_TOP} /></Slot>
              <Slot $w={22}><Bars rows={VALIGN_MID} /></Slot>
              <Slot $w={22} $on><Bars rows={VALIGN_BOT} /></Slot>
              <Slot $w={28}><WrapIcon /></Slot>
            </ToolRow>
            <ToolRow>
              <Slot $w={22}><Bars rows={ALIGN_LEFT} /></Slot>
              <Slot $w={22}><Bars rows={ALIGN_MID} /></Slot>
              <Slot $w={22}><Bars rows={ALIGN_RIGHT} /></Slot>
              <Slot $w={26}><MergeIcon /></Slot>
              <Slot $w={10}><Chevron /></Slot>
            </ToolRow>
            <ToolRow>
              <Slot $w={22}><Indent /></Slot>
              <Slot $w={22}><Indent flip /></Slot>
              <RowRule $w={8} />
              <Slot $w={24}><OrientIcon /></Slot>
              <Slot $w={8}><Chevron /></Slot>
            </ToolRow>
          </GroupStack>
          <GroupLabel $launcher>Alignment</GroupLabel>
          <LauncherIcon />
        </Group>

        <Group $w={97}>
          <GroupStack $pad={8}>
            <ToolRow $h={23}>
              <Combo $w={80}>General<Chevron /></Combo>
            </ToolRow>
            <ToolRow>
              <Slot $w={20} $size={17}>$</Slot>
              <Slot $w={16}><Chevron /></Slot>
              <Slot $w={24} $size={18}>%</Slot>
              <Slot $w={20}><CommaIcon /></Slot>
            </ToolRow>
            <ToolRow>
              <Slot $w={20}><DecimalIcon /></Slot>
              <Slot $w={28}><DecimalIcon more /></Slot>
            </ToolRow>
          </GroupStack>
          <GroupLabel $launcher>Number</GroupLabel>
          <LauncherIcon />
        </Group>

        <Group $w={180}>
          <GroupStack $pad={11}>
            <StyleRow><CondIcon /><span>Conditional Formatting</span><Chevron /></StyleRow>
            <StyleRow><TableIcon /><span>Format as Table</span><Chevron /></StyleRow>
            <StyleRow><CellStyleIcon /><span>Cell Styles</span><Chevron /></StyleRow>
          </GroupStack>
          <GroupLabel>Styles</GroupLabel>
        </Group>

        <Group $w={54}>
          <BigColumn>
            <BigButton><CellsIcon /></BigButton>
            <BigText>Cells</BigText>
            <Chevron />
          </BigColumn>
        </Group>

        <Group $w={54}>
          <BigColumn>
            <BigButton><SearchIcon color="#444" size={17} /></BigButton>
            <BigText>Editing</BigText>
            <Chevron />
          </BigColumn>
        </Group>

        <Group $w={58}>
          <BigColumn>
            <IdeaMark><BoltIcon /></IdeaMark>
            <IdeasText>Ideas</IdeasText>
          </BigColumn>
          <GroupLabel>Ideas</GroupLabel>
        </Group>

        <Collapse width="11" height="6" viewBox="0 0 11 6">
          <path d="M.8 5.200 5.500.8l4.700 4.400" fill="none" stroke="#444" />
        </Collapse>
      </Ribbon>

      <Notice>
        <InfoIcon />
        <NoticeHead>SUBSCRIPTION EXPIRED</NoticeHead>
        <NoticeText>To keep using Excel without interruption, please reactivate now.</NoticeText>
        <NoticeButton><u>R</u>eactivate</NoticeButton>
        <NoticeClose width="10" height="10" viewBox="0 0 10 10">
          <path d="M1 1l8 8M9 1 1 9" stroke="#555" strokeWidth="2" />
        </NoticeClose>
      </Notice>

      <FormulaBar>
        <NameBox>I10<Tri /></NameBox>
        <Grip><GripDots /></Grip>
        <FxBox>
          <CrossIcon color="#b4b4b4" size={11} width={1.4} />
          <CheckIcon />
          <FxMark>fx</FxMark>
        </FxBox>
        <FormulaInput><Chevron color="#777" /></FormulaInput>
      </FormulaBar>

      <SheetArea>
        <GridClip><Worksheet /></GridClip>
        <VScroll>
          <ScrollButton><Tri dir="up" size={7} /></ScrollButton>
          <VThumb />
          <ScrollButton><Tri size={7} /></ScrollButton>
        </VScroll>
      </SheetArea>

      <SheetBar>
        <SheetArrows>
          <Tri dir="left" color="#c4c4c4" size={7} />
          <Tri dir="right" color="#c4c4c4" size={7} />
        </SheetArrows>
        <SheetTab>Weather Statistics</SheetTab>
        <AddSheet>
          <svg width="8" height="8" viewBox="0 0 8 8"><path d="M4 0v8M0 4h8" stroke="#666" /></svg>
        </AddSheet>
        <BarGrip><GripDots /></BarGrip>
        <HScroll>
          <ScrollButton><Tri dir="left" size={8} /></ScrollButton>
          <HThumb />
          <ScrollButton><Tri dir="right" size={8} /></ScrollButton>
        </HScroll>
      </SheetBar>

      <StatusBar>
        <StatusText>Ready</StatusText>
        <ViewButton $on><GridView /></ViewButton>
        <ViewButton><PageView /></ViewButton>
        <ViewButton><BreakView /></ViewButton>
        <ZoomMinus />
        <ZoomTrack />
        <ZoomPlus>+</ZoomPlus>
        <StatusText>120%</StatusText>
      </StatusBar>
    </ExcelWindow>
  </Screen>
);

export default App;
